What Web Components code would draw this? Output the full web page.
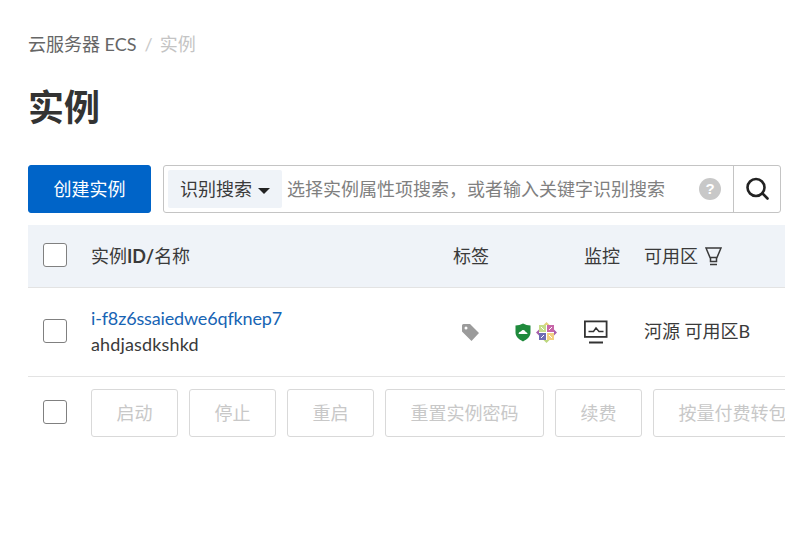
<!DOCTYPE html>
<html lang="zh">
<head>
<meta charset="utf-8">
<title>实例</title>
<style>
  html, body { margin: 0; height: 100%; overflow: hidden; background: #fff; }
  body {
    font: 18px/26px Lato, "Noto Sans CJK SC", sans-serif;
    color: #3a3a3a;
  }
</style>
</head>
<body>
<ecs-page>
  <ecs-breadcrumb slot="crumb"></ecs-breadcrumb>
  <ecs-title slot="title">实例</ecs-title>
  <ecs-toolbar slot="toolbar"></ecs-toolbar>
  <ecs-table slot="table"></ecs-table>
</ecs-page>

<script>
class EcsPage extends HTMLElement {
  connectedCallback() {
    this.attachShadow({ mode: 'open' }).innerHTML = `
      <style>
        :host { display: flex; flex-direction: column; width: 785px; height: 533px; box-sizing: border-box; padding: 31px 0 0 28px; overflow: hidden; }
        .titulo { margin-top: 24px; }
        .barra { margin-top: 32px; }
        .tabela { margin-top: 12px; }
      </style>
      <slot name="crumb"></slot>
      <div class="titulo"><slot name="title"></slot></div>
      <div class="barra"><slot name="toolbar"></slot></div>
      <div class="tabela"><slot name="table"></slot></div>`;
  }
}

class EcsBreadcrumb extends HTMLElement {
  connectedCallback() {
    this.attachShadow({ mode: 'open' }).innerHTML = `
      <style>
        :host { display: flex; height: 26px; line-height: 26px; color: #666; white-space: nowrap; }
        .sep { color: #c8c8c8; margin: 0 7px 0 8px; }
        .atual { color: #c4c4c4; }
      </style>
      <span>云服务器 ECS</span><span class="sep">/</span><span class="atual">实例</span>`;
  }
}

class EcsTitle extends HTMLElement {
  connectedCallback() {
    this.attachShadow({ mode: 'open' }).innerHTML = `
      <style>
        :host { display: block; font-size: 36px; line-height: 52px; font-weight: 700; color: #333; }
      </style>
      <slot></slot>`;
  }
}

class EcsCheck extends HTMLElement {
  connectedCallback() {
    this.attachShadow({ mode: 'open' }).innerHTML = `
      <style>
        :host { display: block; width: 24px; height: 24px; box-sizing: border-box; background: #fff; border: 1px solid #808080; border-radius: 3px; }
      </style>`;
  }
}

class EcsButton extends HTMLElement {
  connectedCallback() {
    this.attachShadow({ mode: 'open' }).innerHTML = `
      <style>
        :host { display: inline-flex; align-items: center; flex: none; height: 48px; box-sizing: border-box; padding: 0 24.5px; border: 1px solid #d9d9d9; border-radius: 3px; color: #c8c8c8; white-space: nowrap; }
        :host([primario]) { border-color: #0064c8; background: #0064c8; color: #fff; }
      </style>
      <slot></slot>`;
  }
}

class EcsSearch extends HTMLElement {
  connectedCallback() {
    this.attachShadow({ mode: 'open' }).innerHTML = `
      <style>
        :host { display: flex; align-items: stretch; width: 618px; height: 48px; box-sizing: border-box; border: 1px solid #c4c4c4; border-radius: 3px; white-space: nowrap; }
        .campo { flex: 1; display: flex; align-items: center; padding-left: 4px; min-width: 0; }
        .tipo { display: flex; align-items: center; gap: 6px; height: 38px; box-sizing: border-box; padding: 0 12px; width: 114px; background: #eff3f8; border-radius: 2px; color: #3a3a3a; }
        .seta { width: 0; height: 0; border: 6px solid transparent; border-top: 6px solid #222; border-bottom: 0; margin-top: 3px; }
        .dica { margin-left: 5px; color: #808080; flex: 1; }
        .ajuda { width: 22px; height: 22px; border-radius: 50%; background: #c8c8c8; color: #fff; font: 700 15px/22px "Liberation Sans", sans-serif; text-align: center; margin-right: 12px; }
        .lupa { width: 47px; box-sizing: border-box; border-left: 1px solid #c4c4c4; display: flex; align-items: center; justify-content: center; }
      </style>
      <div class="campo">
        <div class="tipo"><span>识别搜索</span><span class="seta"></span></div>
        <span class="dica">选择实例属性项搜索，或者输入关键字识别搜索</span>
        <span class="ajuda">?</span>
      </div>
      <div class="lupa">
        <svg width="24" height="24" viewBox="0 0 24 24" fill="none" stroke="#222" stroke-width="2.6" stroke-linecap="round"><circle cx="11" cy="10.500" r="8.500"/><path d="M17.500 16.500l5 5"/></svg>
      </div>`;
  }
}

class EcsToolbar extends HTMLElement {
  connectedCallback() {
    this.attachShadow({ mode: 'open' }).innerHTML = `
      <style>
        :host { display: flex; gap: 12px; }
      </style>
      <ecs-button primario>创建实例</ecs-button>
      <ecs-search></ecs-search>`;
  }
}

class EcsTable extends HTMLElement {
  connectedCallback() {
    this.attachShadow({ mode: 'open' }).innerHTML = `
      <style>
        :host { display: block; width: 757px; white-space: nowrap; }
        .linha { display: grid; grid-template-columns: 63px 362px 131px 60px 1fr; align-items: center; }
        .linha > ecs-check { margin: 0 0 2px 15px; }
        .cab { height: 63px; box-sizing: border-box; background: #eff3f8; border-bottom: 1px solid #e3e3e3; }
        .corpo { height: 89px; box-sizing: border-box; border-bottom: 1px solid #e3e3e3; }
        .filtro { display: inline-flex; align-items: center; gap: 7px; }
        .id { color: #1764b4; line-height: 26px; letter-spacing: -.15px; }
        .nome { line-height: 26px; letter-spacing: .15px; }
        .texto { padding-bottom: 3px; }
        .etiqueta { display: grid; grid-template-columns: 54px auto auto; align-items: center; justify-content: start; margin-left: 8px; }
        .acoes { display: flex; align-items: center; gap: 11px; padding: 12px 0 0 15px; overflow: hidden; }
        .acoes ecs-check { margin: 0 13px 2px 0; flex: none; }
      </style>
      <div class="linha cab">
        <ecs-check></ecs-check>
        <span>实例<b>ID/</b>名称</span>
        <span>标签</span>
        <span>监控</span>
        <span class="filtro">可用区
          <svg width="17" height="20" viewBox="0 0 17 20" fill="none" stroke="#3a3a3a" stroke-width="1.500"><path d="M1 2h15l-4 9.500H5z"/><path d="M5.500 12v3.500h6V12"/><path d="M5 18.500h7"/></svg>
        </span>
      </div>
      <div class="linha corpo">
        <ecs-check></ecs-check>
        <div class="texto"><div class="id">i-f8z6ssaiedwe6qfknep7</div><div class="nome">ahdjasdkshkd</div></div>
        <div class="etiqueta">
          <svg width="19" height="19" viewBox="0 0 19 19"><path fill="#9b9b9b" fill-rule="evenodd" d="M1 2.500Q1 1 2.500 1H9l9 9-7.500 8L1 8.500zM5 3.500a1.500 1.500 0 100 3 1.500 1.500 0 000-3z"/></svg>
          <svg width="16" height="19" viewBox="0 0 16 19"><path fill="#1f8a3c" d="M8 .5c2.400 1.300 4.700 1.900 7.500 2.100v7c0 4-3.200 6.900-7.500 8.900C3.700 16.500.5 13.600.5 9.600v-7C3.300 2.400 5.600 1.800 8 .5z"/><path fill="#fff" d="M3.600 11c0-1.500 1.100-2.400 2.300-2.400C6.400 7.500 7.300 7 8.200 7c1.300 0 2.300 1 2.400 2 1.100.1 1.900 1 1.900 2z"/></svg>
          <svg width="21" height="21" viewBox="0 0 21 21" style="margin-left:5px">
            <path fill="#a860ab" d="M0 10.500l3-3v6zM21 10.500l-3-3v6z"/>
            <path fill="#e2d47a" d="M10.500 0l-3 3h6z"/><path fill="#bcd77e" d="M10.500 21l-3-3h6z"/>
            <rect x="3" y="3" width="7" height="7" fill="#c6dc8a"/><rect x="11" y="3" width="7" height="7" fill="#c766a8"/>
            <rect x="3" y="11" width="7" height="7" fill="#6f6cb4"/><rect x="11" y="11" width="7" height="7" fill="#f2d080"/>
            <path stroke="#fff" stroke-width="1" d="M5 5l3 3M16 5l-3 3M5 16l3-3M16 16l-3-3"/>
          </svg>
        </div>
        <svg width="24" height="24" viewBox="0 0 24 24" fill="none" stroke="#333"><rect x=".9" y="1.400" width="21.700" height="15.500" stroke-width="1.800"/><path stroke-width="1.500" d="M4.500 11.500h5l2.500-3.500 3 3.500h4.500"/><path stroke-width="2" d="M5 22.500h14"/></svg>
        <span class="texto">河源 可用区B</span>
      </div>
      <div class="acoes">
        <ecs-check></ecs-check>
        <ecs-button>启动</ecs-button>
        <ecs-button>停止</ecs-button>
        <ecs-button>重启</ecs-button>
        <ecs-button>重置实例密码</ecs-button>
        <ecs-button>续费</ecs-button>
        <ecs-button>按量付费转包年包月</ecs-button>
      </div>`;
  }
}

customElements.define('ecs-page', EcsPage);
customElements.define('ecs-breadcrumb', EcsBreadcrumb);
customElements.define('ecs-title', EcsTitle);
customElements.define('ecs-check', EcsCheck);
customElements.define('ecs-button', EcsButton);
customElements.define('ecs-search', EcsSearch);
customElements.define('ecs-toolbar', EcsToolbar);
customElements.define('ecs-table', EcsTable);
</script>
</body>
</html>
